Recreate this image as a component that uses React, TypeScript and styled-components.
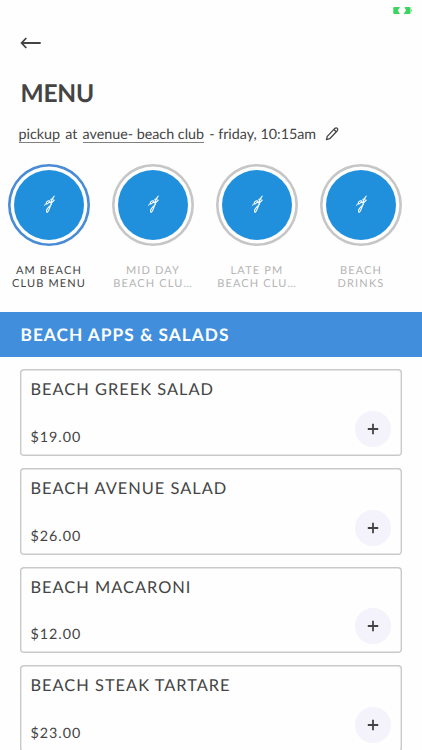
import React, { useState } from 'react';
import styled, { createGlobalStyle } from 'styled-components';

const GlobalStyle = createGlobalStyle`
  * {
    box-sizing: border-box;
  }

  body {
    margin: 0;
    background: #fefefe;
    color: #444444;
    font-family: Lato, 'Open Sans', sans-serif;
    text-rendering: geometricPrecision;
  }

  button {
    font-family: inherit;
    color: inherit;
    border: none;
    background: none;
    padding: 0;
    cursor: pointer;
    text-rendering: inherit;
  }
`;

const Screen = styled.div`
  height: 750px;
  overflow: hidden;
  display: flex;
  flex-direction: column;
`;

const StatusBar = styled.div`
  height: 20px;
  flex: none;
  display: flex;
  justify-content: flex-end;
  padding: 6px 9.5px 0 0;
`;

const BackButton = styled.button`
  flex: none;
  display: block;
  width: 22px;
  height: 14px;
  margin: 16px 0 0 20px;

  svg {
    display: block;
  }
`;

const Title = styled.h1`
  flex: none;
  margin: 29px 0 0 20.5px;
  font-size: 24.5px;
  line-height: 30px;
  font-weight: 700;
  letter-spacing: -0.2px;
`;

const OrderInfo = styled.div`
  flex: none;
  display: flex;
  align-items: center;
  gap: 5.2px;
  height: 22px;
  margin: 14px 0 0 18.5px;
  font-size: 14.3px;
  line-height: 17px;
  white-space: nowrap;
`;

const InfoLink = styled.a`
  box-shadow: inset 0 -1px 0 #808080;
`;

const EditButton = styled.button`
  margin-left: 4px;
  height: 16px;

  svg {
    display: block;
  }
`;

const Categories = styled.div`
  flex: none;
  display: flex;
  gap: 22px;
  height: 148px;
  margin: 19px 0 0 8px;
`;

const Category = styled.button<{ $active: boolean }>`
  flex: none;
  width: 82px;
  display: flex;
  flex-direction: column;
  align-items: center;
  color: ${({ $active }) => ($active ? '#444444' : '#b5b5b5')};
`;

const Ring = styled.span<{ $active: boolean }>`
  width: 82px;
  height: 82px;
  border-radius: 50%;
  box-shadow: inset 0 0 0 2.6px ${({ $active }) => ($active ? '#4a8bd6' : '#c6c6c6')};
  display: flex;
  align-items: center;
  justify-content: center;
`;

const Disc = styled.span`
  width: 70px;
  height: 70px;
  flex: none;
  border-radius: 50%;
  background: #2090dd;
  display: flex;
  align-items: center;
  justify-content: center;
`;

const CategoryLabel = styled.span`
  margin-top: 18px;
  font-size: 11px;
  line-height: 13px;
  letter-spacing: 1.15px;
  text-align: center;
  white-space: pre;
`;

const SectionHeader = styled.h2`
  flex: none;
  height: 45px;
  margin: 0;
  padding-left: 20.5px;
  background: #418fdc;
  color: #ffffff;
  font-size: 17.3px;
  line-height: 45px;
  font-weight: 700;
  letter-spacing: 1px;
`;

const ItemList = styled.div`
  flex: none;
  display: flex;
  flex-direction: column;
  gap: 12px;
  padding: 12px 20.5px 0 20.4px;
`;

const ItemCard = styled.div`
  height: 86.8px;
  border-radius: 4px;
  box-shadow: inset 0 0 0 1.4px #c9c9c9;
  display: flex;
  justify-content: space-between;
  align-items: flex-end;
  padding: 0 10.5px 9px 10.1px;
`;

const ItemText = styled.div`
  align-self: stretch;
  display: flex;
  flex-direction: column;
  justify-content: space-between;
  padding-top: 11px;
  margin-bottom: -1px;
`;

const ItemName = styled.div`
  font-size: 16.4px;
  line-height: 20px;
  letter-spacing: 1px;
`;

const ItemPrice = styled.div`
  font-size: 14.3px;
  line-height: 20px;
  letter-spacing: 1px;
`;

const AddButton = styled.button`
  width: 36px;
  height: 36px;
  border-radius: 50%;
  background: #f4f2fa;
  display: flex;
  align-items: center;
  justify-content: center;
`;

const BatteryIcon = () => (
  <svg width="20" height="9" viewBox="0 0 20 9">
    <path d="M1 1H7L4.8 4.5L7 8H1Q.3 8 .3 7V2Q.3 1 1 1Z" fill="#3bd45f" />
    <path d="M11.5 1H16.5Q17.5 1 17.5 2V7Q17.5 8 16.5 8H10.5L13 4.5Z" fill="#3bd45f" />
    <path d="M18.5 3.5V5.5" stroke="#3bd45f" strokeWidth="0.8" />
  </svg>
);

const ArrowIcon = () => (
  <svg width="22" height="14" viewBox="0 0 22 14" fill="none" stroke="#444444" strokeWidth="1.8">
    <path d="M20.7 7H1.8M6.3 2L1.6 7L6.3 12" />
  </svg>
);

const PencilIcon = () => (
  <svg width="15" height="16" viewBox="0 0 15 16" fill="none" stroke="#444444" strokeWidth="1.3" strokeLinejoin="round">
    <path d="M1.4 13.6L2.3 10.4L9.8 2.4Q11 1.3 12.2 2.3Q13.4 3.4 12.3 4.7L4.7 12.7Z" />
    <path d="M8.9 3.5L11.3 5.8" />
  </svg>
);

const ScriptMark = () => (
  <svg width="14" height="20" viewBox="0 0 14 20" fill="none" stroke="#ffffff" strokeWidth="1.1" strokeLinecap="round">
    <path d="M8 6C6 5 4 7 4.2 8.6C4.8 9.6 7 7.8 8 6C7.4 7.8 8 8.3 9.4 7" />
    <path d="M12.2 1.2C10.4 3 9.2 5.6 9.3 7.2C10 7.8 11.2 6.4 12.2 5.2" />
    <path d="M10 6.4C8.6 10 7.4 15.2 5.6 17C4.2 17.8 4 15.4 5.6 13.4C6.6 12 8 10.6 9.6 9.4" />
    <path d="M2.2 10.4L4.2 8.8M8.6 4.4L11.4 4" strokeWidth="0.9" />
  </svg>
);

const PlusIcon = () => (
  <svg width="12" height="12" viewBox="0 0 12 12" stroke="#444444" strokeWidth="1.8">
    <path d="M6 .8V11.2M.8 6H11.2" />
  </svg>
);

const categories = ['AM BEACH\nCLUB MENU', 'MID DAY\nBEACH CLU…', 'LATE PM\nBEACH CLU…', 'BEACH\nDRINKS'];

const items = [
  { name: 'BEACH GREEK SALAD', price: 19 },
  { name: 'BEACH AVENUE SALAD', price: 26 },
  { name: 'BEACH MACARONI', price: 12 },
  { name: 'BEACH STEAK TARTARE', price: 23 },
];

const App: React.FC = () => {
  const [selected, setSelected] = useState(0);

  return (
    <Screen>
      <GlobalStyle />
      <StatusBar>
        <BatteryIcon />
      </StatusBar>
      <BackButton aria-label="Back">
        <ArrowIcon />
      </BackButton>
      <Title>MENU</Title>
      <OrderInfo>
        <InfoLink>pickup</InfoLink>
        <span>at</span>
        <InfoLink>avenue- beach club</InfoLink>
        <span>- friday, 10:15am</span>
        <EditButton aria-label="Edit">
          <PencilIcon />
        </EditButton>
      </OrderInfo>

      <Categories>
        {categories.map((label, index) => (
          <Category key={label} $active={index === selected} onClick={() => setSelected(index)}>
            <Ring $active={index === selected}>
              <Disc>
                <ScriptMark />
              </Disc>
            </Ring>
            <CategoryLabel>{label}</CategoryLabel>
          </Category>
        ))}
      </Categories>

      <SectionHeader>BEACH APPS &amp; SALADS</SectionHeader>
      <ItemList>
        {items.map((item) => (
          <ItemCard key={item.name}>
            <ItemText>
              <ItemName>{item.name}</ItemName>
              <ItemPrice>${item.price.toFixed(2)}</ItemPrice>
            </ItemText>
            <AddButton aria-label="Add">
              <PlusIcon />
            </AddButton>
          </ItemCard>
        ))}
      </ItemList>
    </Screen>
  );
};

export default App;
